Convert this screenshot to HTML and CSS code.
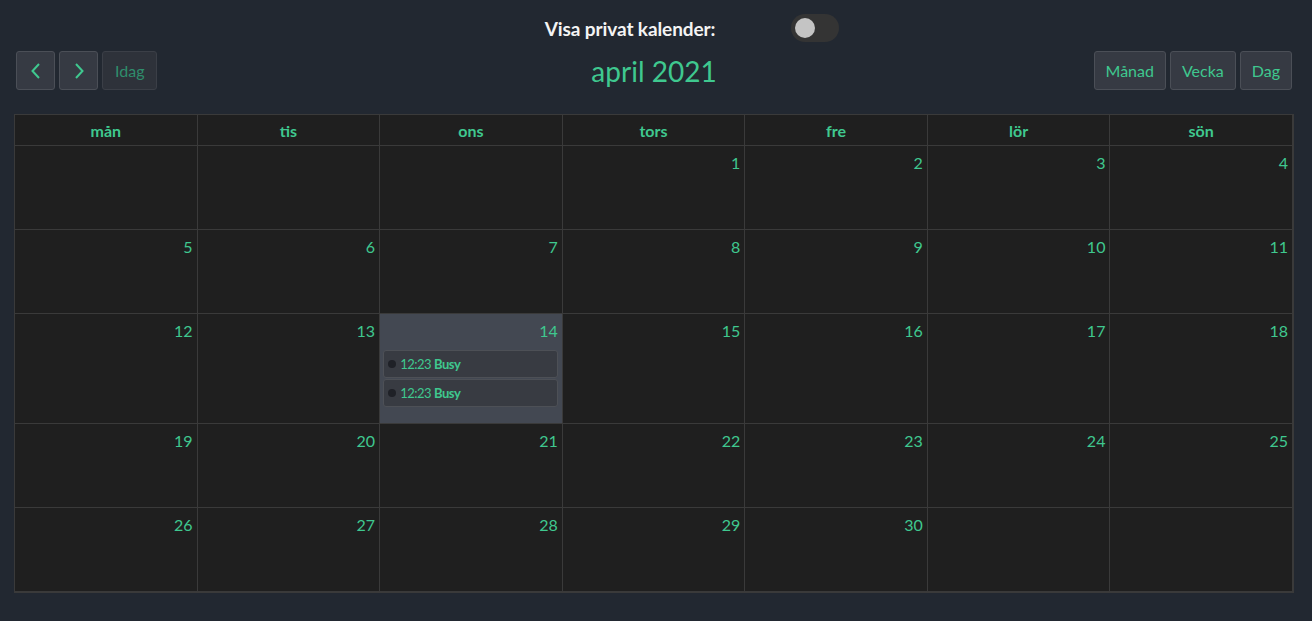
FILE: index.html
```html
<!DOCTYPE html>
<html lang="sv">
<head>
<meta charset="utf-8">
<title>Kalender</title>
<link rel="stylesheet" href="styles.css">
</head>
<body>
<div class="page">
  <div class="private">
    <span class="private-label">Visa privat kalender:</span>
    <span class="switch"><span class="knob"></span></span>
  </div>
  <div class="toolbar">
    <div class="group">
      <button class="btn icon" aria-label="föregående"><svg width="14" height="18" viewBox="0 0 14 18"><path d="M10 2 L3.5 9 L10 16" fill="none" stroke="currentColor" stroke-width="2"/></svg></button>
      <button class="btn icon" aria-label="nästa"><svg width="14" height="18" viewBox="0 0 14 18"><path d="M4 2 L10.5 9 L4 16" fill="none" stroke="currentColor" stroke-width="2"/></svg></button>
      <button class="btn disabled">Idag</button>
    </div>
    <h2 class="title">april 2021</h2>
    <div class="group end">
      <button class="btn">Månad</button>
      <button class="btn">Vecka</button>
      <button class="btn">Dag</button>
    </div>
  </div>
  <div class="cal">
    <div class="head">mån</div><div class="head">tis</div><div class="head">ons</div><div class="head">tors</div><div class="head">fre</div><div class="head">lör</div><div class="head last">sön</div>

    <div class="day"></div><div class="day"></div><div class="day"></div><div class="day"><span class="num">1</span></div><div class="day"><span class="num">2</span></div><div class="day"><span class="num">3</span></div><div class="day last"><span class="num">4</span></div>

    <div class="day"><span class="num">5</span></div><div class="day"><span class="num">6</span></div><div class="day"><span class="num">7</span></div><div class="day"><span class="num">8</span></div><div class="day"><span class="num">9</span></div><div class="day"><span class="num">10</span></div><div class="day last"><span class="num">11</span></div>

    <div class="day tall"><span class="num">12</span></div><div class="day tall"><span class="num">13</span></div>
    <div class="day tall today"><span class="num">14</span>
      <div class="event"><span class="dot"></span><span class="time">12:23</span> <b>Busy</b></div>
      <div class="event"><span class="dot"></span><span class="time">12:23</span> <b>Busy</b></div>
    </div>
    <div class="day tall"><span class="num">15</span></div><div class="day tall"><span class="num">16</span></div><div class="day tall"><span class="num">17</span></div><div class="day tall last"><span class="num">18</span></div>

    <div class="day"><span class="num">19</span></div><div class="day"><span class="num">20</span></div><div class="day"><span class="num">21</span></div><div class="day"><span class="num">22</span></div><div class="day"><span class="num">23</span></div><div class="day"><span class="num">24</span></div><div class="day last"><span class="num">25</span></div>

    <div class="day bottom"><span class="num">26</span></div><div class="day bottom"><span class="num">27</span></div><div class="day bottom"><span class="num">28</span></div><div class="day bottom"><span class="num">29</span></div><div class="day bottom"><span class="num">30</span></div><div class="day bottom"></div><div class="day bottom last"></div>
  </div>
</div>
</body>
</html>
```
FILE: styles.css
```css
* { box-sizing: border-box; }
html, body { margin: 0; padding: 0; }
body {
  background: #222831;
  font-family: Lato, "Open Sans", sans-serif;
  color: #3fc88f;
  height: 621px;
  overflow: hidden;
}
.page { padding: 14px 18px 0 14px; }
.private {
  display: flex;
  align-items: center;
  justify-content: center;
  height: 28px;
  gap: 76px;
  padding-left: 76px;
}
.private-label {
  color: #f4f4f4;
  font-weight: 700;
  font-size: 19px;
  letter-spacing: -0.1px;
}
.switch {
  width: 48px;
  height: 28px;
  border-radius: 14px;
  background: #343434;
  position: relative;
}
.knob {
  position: absolute;
  left: 4px;
  top: 4px;
  width: 20px;
  height: 20px;
  border-radius: 50%;
  background: #c4c4c4;
}
.toolbar {
  display: grid;
  grid-template-columns: 1fr auto 1fr;
  align-items: center;
  margin: 9px 2px 0 2px;
  height: 39px;
}
.group { display: flex; gap: 4px; }
.group.end { justify-content: flex-end; }
.btn {
  height: 39px;
  background: #363a43;
  border: 1px solid #4b4f57;
  border-radius: 3px;
  color: #3fc88f;
  font-family: inherit;
  font-size: 16px;
  padding: 0 11px;
  display: flex;
  align-items: center;
  justify-content: center;
}
.btn.icon { width: 39px; padding: 0; }
.btn.disabled { color: #2f8d6c; background: #2e323a; border-color: #3b3f47; padding: 0 12px; }
.title {
  margin: 0;
  font-weight: 400;
  font-size: 28px;
  color: #3fc88f;
}
.cal {
  margin-top: 24px;
  display: grid;
  grid-template-columns: repeat(7, 1fr);
  grid-template-rows: 31px 84px 84px 110px 84px 84px;
  border: 1px solid #3a3a3a;
  width: 1280px;
  background: #1f1f1f;
}
.head, .day {
  border-right: 1px solid #3a3a3a;
  border-bottom: 1px solid #3a3a3a;
}
.head {
  display: flex;
  align-items: center;
  justify-content: center;
  font-weight: 700;
  font-size: 16px;
}
.day {
  padding: 7px 4px 0 3px;
  display: flex;
  flex-direction: column;
  align-items: stretch;
}
.num {
  display: block;
  text-align: right;
  font-size: 16px;
  line-height: 20px;
}
.today { background: #434852; }
.tall .num { margin-bottom: 9px; }
.event {
  height: 28px;
  margin: 0 0 1px 0;
  background: #383b42;
  border: 1px solid #4d5056;
  border-radius: 3px;
  display: flex;
  align-items: center;
  padding-left: 4px;
  font-size: 13px;
  letter-spacing: -0.5px;
}
.event b { margin-left: 3px; font-weight: 700; }
.dot {
  width: 8px;
  height: 8px;
  border-radius: 50%;
  background: #1f2127;
  margin-right: 4px;
}
```
